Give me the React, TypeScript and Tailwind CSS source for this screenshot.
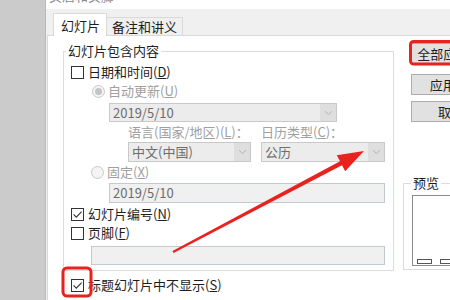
import React from "react";

const ui = "font-['Noto_Sans_CJK_SC',sans-serif] text-[13px] leading-[16px]";

function CheckBox({ checked }: { checked?: boolean }) {
  return (
    <span className="flex h-[13px] w-[13px] shrink-0 items-center justify-center border border-[#333333] bg-white">
      {checked && (
        <svg width="11" height="11" viewBox="0 0 11 11">
          <path d="M1.6 5.4 L4.3 8.1 L9.6 2.6" fill="none" stroke="#333333" strokeWidth="1.1" />
        </svg>
      )}
    </span>
  );
}

function Radio({ on }: { on?: boolean }) {
  return (
    <span className="flex h-[13px] w-[13px] shrink-0 items-center justify-center rounded-full border border-[#c8c8c8] bg-[#f4f4f4]">
      {on && <span className="h-[7px] w-[7px] rounded-full bg-[#c4c4c4]" />}
    </span>
  );
}

function Chevron() {
  return (
    <svg width="9" height="6" viewBox="0 0 9 6">
      <path d="M1 1.2 L4.5 4.6 L8 1.2" fill="none" stroke="#b4b4b4" strokeWidth="1" />
    </svg>
  );
}

function Combo({ value, className }: { value: string; className: string }) {
  return (
    <div className={"flex border border-[#c9c9c9] bg-[#ececec] " + className}>
      <span className="flex flex-1 items-center pl-[3px] text-[#6d6d6d]">{value}</span>
      <span className="flex w-[16px] items-center justify-center bg-[#dedede]">
        <Chevron />
      </span>
    </div>
  );
}

function Field({ value, className }: { value?: string; className: string }) {
  return (
    <div className={"flex items-center border border-[#c3c9d2] bg-[#f0f0f0] pl-[3px] text-[#6d6d6d] " + className}>
      {value}
    </div>
  );
}

function Button({ children, className }: { children: React.ReactNode; className: string }) {
  return (
    <div className={"flex h-[21px] w-[80px] items-center justify-center border border-[#adadad] bg-[#e1e1e1] text-[#1e1e1e] " + className}>
      {children}
    </div>
  );
}

export default function App() {
  return (
    <div className={`relative flex h-[300px] w-[450px] overflow-hidden bg-[#f0f0f0] ${ui}`}>
      <div className="w-[45px] shrink-0 bg-[#cbcbcb]" />

      <div className="flex w-[480px] shrink-0 flex-col border-l border-[#b9b9b9] bg-[#f0f0f0]">
        {/* title bar, mostly cut off */}
        <div className="h-[9px] overflow-hidden bg-white pl-[3px]">
          <div className="-mt-[12px] text-[#8a8a8a]">页眉和页脚</div>
        </div>

        {/* tabs */}
        <div className="flex h-[26px] items-end pl-[7px]">
          <div className="relative z-10 -mb-px h-[23px] border border-b-0 border-[#d9d9d9] bg-white pl-[7px] pr-[6px] pt-[4px] text-[#1e1e1e]">
            幻灯片
          </div>
          <div className="flex h-[18px] items-center border-r border-t border-[#d9d9d9] bg-[#f0f0f0] pl-[5px] pr-[5px] text-[#1e1e1e]">
            备注和讲义
          </div>
        </div>

        {/* tab page */}
        <div className="ml-[1px] flex flex-1 border-l border-t border-[#d9d9d9] bg-white pl-[15px] pt-[7px]">
          <div className="flex flex-col">
            <fieldset className="w-[331px] border border-[#dcdcdc]">
              <legend className="ml-[2px] px-[2px] text-[#1e1e1e]">幻灯片包含内容</legend>
              <div className="flex flex-col pb-[5px] pl-[7px] pr-[7px]">
                <div className="mt-[5px] flex h-[16px] items-center gap-[4px] text-[#1e1e1e]">
                  <CheckBox />
                  <span>日期和时间(<u>D</u>)</span>
                </div>
                <div className="mt-[3px] flex h-[16px] items-center gap-[3px] pl-[21px] text-[#a0a0a0]">
                  <Radio on />
                  <span>自动更新(<u>U</u>)</span>
                </div>
                <Combo value="2019/5/10" className="ml-[38px] mt-[4px] h-[19px] w-[228px]" />
                <div className="ml-[57px] mt-[2px] flex h-[16px] items-center text-[#a0a0a0]">
                  <span className="w-[133px]">语言(国家/地区)(<u>L</u>)：</span>
                  <span>日历类型(<u>C</u>)：</span>
                </div>
                <div className="ml-[57px] mt-[2px] flex gap-[10px]">
                  <Combo value="中文(中国)" className="h-[20px] w-[123px]" />
                  <Combo value="公历" className="h-[20px] w-[124px]" />
                </div>
                <div className="mt-[2px] flex h-[16px] items-center gap-[3px] pl-[20px] text-[#a0a0a0]">
                  <Radio />
                  <span>固定(<u>X</u>)</span>
                </div>
                <Field value="2019/5/10" className="ml-[38px] mt-[3px] h-[20px] w-[276px]" />
                <div className="mt-[3px] flex h-[16px] items-center gap-[4px] text-[#1e1e1e]">
                  <CheckBox checked />
                  <span>幻灯片编号(<u>N</u>)</span>
                </div>
                <div className="mt-[3px] flex h-[16px] items-center gap-[4px] text-[#1e1e1e]">
                  <CheckBox />
                  <span>页脚(<u>F</u>)</span>
                </div>
                <Field className="ml-[20px] mt-[5px] h-[19px] w-[294px]" />
              </div>
            </fieldset>
            <div className="mt-[6px] flex h-[16px] items-center gap-[4px] pl-[8px] text-[#1e1e1e]">
              <CheckBox checked />
              <span>标题幻灯片中不显示(<u>S</u>)</span>
            </div>
          </div>

          {/* buttons and preview */}
          <div className="ml-[17px] flex flex-col">
            <Button className="">全部应用(<u>Y</u>)</Button>
            <Button className="mt-[10px]">应用(<u>A</u>)</Button>
            <Button className="mt-[6px]">取消</Button>
            <fieldset className="-ml-[8px] mt-[53px] w-[120px] border border-[#dcdcdc]">
              <legend className="ml-[7px] px-[2px] text-[#1e1e1e]">预览</legend>
              <div className="pb-[3px] pl-[8px] pt-[4px]">
                <div className="flex h-[71px] w-[100px] items-end gap-[8px] border border-[#8c8c8c] bg-white pb-[1px] pl-[4px]">
                  <span className="h-[5px] w-[15px] border border-[#555555] bg-white" />
                  <span className="h-[5px] w-[15px] border border-[#555555] bg-white" />
                </div>
              </div>
            </fieldset>
          </div>
        </div>
      </div>

      {/* red annotations */}
      <svg className="pointer-events-none absolute inset-0" width="450" height="300" viewBox="0 0 450 300">
        <rect x="63" y="268" width="28" height="28" rx="4" fill="none" stroke="#e8231f" strokeWidth="3" />
        <rect x="410.5" y="41.5" width="60" height="22.5" rx="3" fill="none" stroke="#e8231f" strokeWidth="3" />
        <polygon
          points="172.5,251.1 340,161.3 336.8,155.2 364,151 345.2,171.2 342,165.2 173.5,252.9"
          fill="#e8231f"
        />
      </svg>
    </div>
  );
}
